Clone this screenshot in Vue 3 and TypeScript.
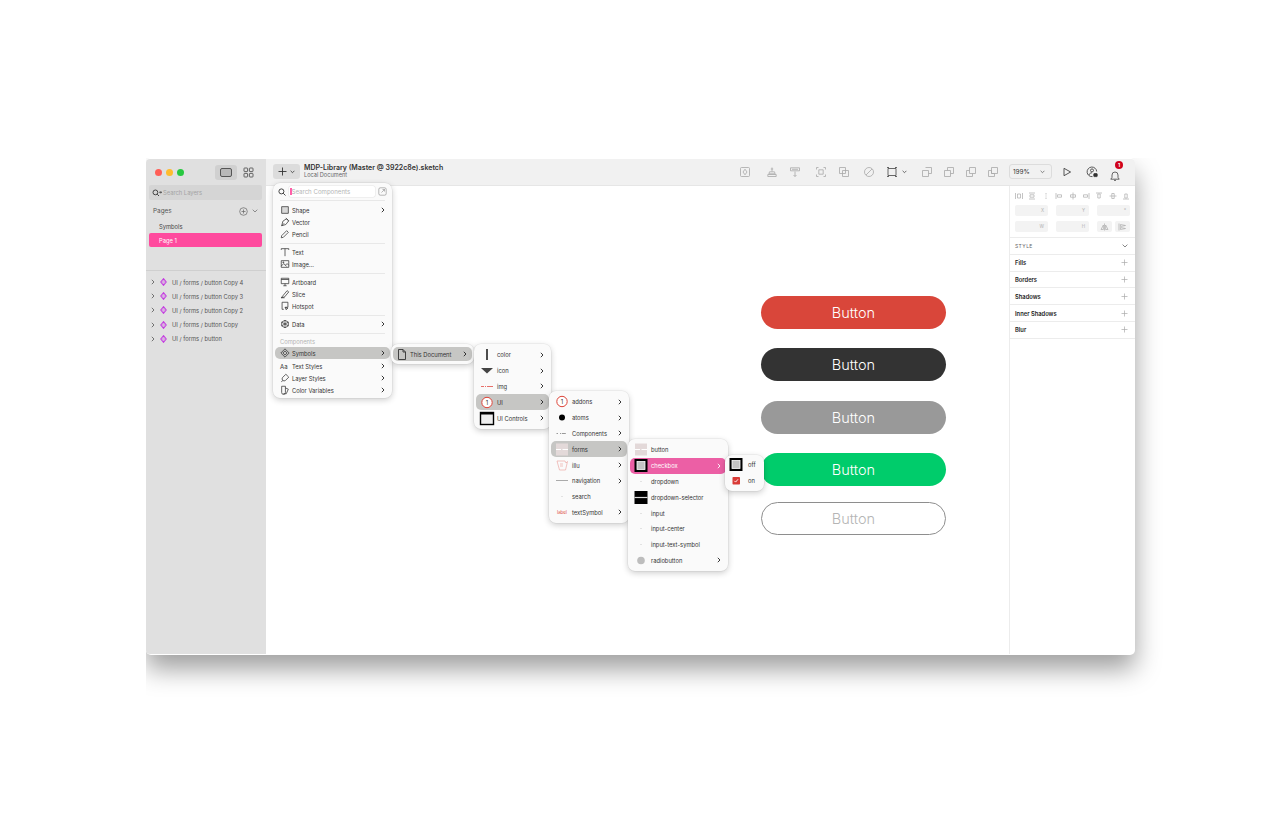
<template>
  <div class="page">
    <div class="window">
      <aside class="sidebar">
        <div class="side-top">
          <div class="lights"><i class="red" /><i class="yellow" /><i class="green" /></div>
          <div class="view-btn on">
            <svg width="14" height="11" viewBox="0 0 14 11"><rect x="1.5" y="1.5" width="11" height="8" rx="1.5" fill="#b8b8b8" stroke="#555" /></svg>
          </div>
          <div class="view-btn">
            <svg width="11" height="11" viewBox="0 0 11 11" fill="none" stroke="#444" stroke-width=".8"><rect x="1" y="1" width="3.6" height="3.6" rx=".6" /><rect x="6.4" y="1" width="3.6" height="3.6" rx=".6" /><rect x="1" y="6.4" width="3.6" height="3.6" rx=".6" /><rect x="6.4" y="6.4" width="3.6" height="3.6" rx=".6" /></svg>
          </div>
        </div>
        <div class="side-search">
          <svg width="10" height="8" viewBox="0 0 10 8" fill="none" stroke="#444"><circle cx="3.4" cy="3.4" r="2.4" /><path d="M5.2 5.2 7 7M7.6 3h2L8.6 4.2z" /></svg>
          <span>Search Layers</span>
        </div>
        <div class="pages-head">
          <span>Pages</span>
          <svg class="pages-add" width="9" height="9" viewBox="0 0 9 9" fill="none" stroke="#666" stroke-width=".7"><circle cx="4.5" cy="4.5" r="3.8" /><path d="M4.5 2.5v4M2.5 4.5h4" /></svg>
          <svg width="6" height="4" viewBox="0 0 6 4" fill="none" stroke="#666" stroke-width=".7"><path d="m.7.7 2.3 2.3L5.300.7" /></svg>
        </div>
        <div class="page-row">Symbols</div>
        <div class="page-row active">Page 1</div>
        <div class="layers">
          <div v-for="layer in layers" :key="layer" class="layer">
            <svg width="4" height="6" viewBox="0 0 4 6" fill="none" stroke="#555" stroke-width=".8"><path d="m.8.8 2.200 2.200L.8 5.200" /></svg>
            <svg width="7" height="8" viewBox="0 0 7 8" fill="none" stroke="#c43ee0" stroke-width="1.100"><path d="M3.500.7 6.200 4 3.500 7.300.8 4z" /><path d="M3.500 2.600 4.600 4 3.500 5.400 2.400 4z" stroke-width=".5" /></svg>
            <span>{{ layer }}</span>
          </div>
        </div>
      </aside>

      <div class="main">
        <header class="toolbar">
          <div class="add-btn">
            <svg width="9" height="9" viewBox="0 0 9 9" stroke="#333" stroke-width=".9"><path d="M4.500.5v8M.5 4.500h8" /></svg>
            <svg width="5" height="4" viewBox="0 0 5 4" fill="none" stroke="#333" stroke-width=".8"><path d="m.6.800 1.900 1.900L4.400.8" /></svg>
          </div>
          <div class="doc">
            <strong>MDP-Library (Master @ 3922c8e).sketch</strong>
            <span>Local Document</span>
          </div>
          <div class="tools">
            <svg v-for="tool in tools" :key="tool.x" class="tool" :class="{ dark: tool.dark }" :style="{ left: tool.x + 'px' }" width="12" height="12" viewBox="0 0 12 12" fill="none" stroke-width=".8"><path :d="tool.d" /></svg>
            <svg class="tool-caret" width="5" height="4" viewBox="0 0 5 4" fill="none" stroke="#333" stroke-width=".7"><path d="m.6.8 1.900 1.900L4.400.8" /></svg>
          </div>
          <div class="zoom-box">
            <span>199%</span>
            <svg width="5" height="4" viewBox="0 0 5 4" fill="none" stroke="#555" stroke-width=".7"><path d="m.6.8 1.900 1.900L4.400.8" /></svg>
          </div>
          <svg class="right-ico" width="10" height="10" viewBox="0 0 10 10" fill="none" stroke="#444" stroke-width=".9"><path d="M2 1.300v7.400L8.600 5z" /></svg>
          <svg class="right-ico user" width="12" height="12" viewBox="0 0 12 12" fill="none" stroke="#333" stroke-width=".8"><path d="M6.500 10.600A4.800 4.800 0 1 1 10.700 5.500M2.800 9c.6-1.500 1.800-2.200 3.200-2.200" /><circle cx="6" cy="4.400" r="1.500" /><rect x="7.800" y="7.600" width="3.400" height="3" rx=".5" fill="#333" /></svg>
          <div class="bell">
            <svg width="12" height="12" viewBox="0 0 12 12" fill="none" stroke="#444" stroke-width=".8"><path d="M1.800 9.200h8.400L9 7.400V5a3 3 0 0 0-6 0v2.400zM5 10.400h2" /></svg>
            <b>1</b>
          </div>
        </header>

        <div class="content">
          <section class="canvas">
            <button v-for="btn in buttons" :key="btn.cls" class="cta" :class="btn.cls">Button</button>
          </section>

          <aside class="inspector">
            <div class="align-row">
              <svg v-for="a in aligns" :key="a" width="8" height="8" viewBox="0 0 8 8" fill="none" stroke="#b5b5b5" stroke-width=".8"><path :d="a" /></svg>
            </div>
            <div class="fields">
              <div v-for="f in ['X', 'Y', '°', 'W', 'H']" :key="f" class="field">{{ f }}</div>
              <div class="field-pair">
                <div class="field small">
                  <svg width="9" height="8" viewBox="0 0 9 8" fill="none" stroke="#aaa" stroke-width=".7"><path d="M4.500.5v7M3.400 2 1 6.500h2.400zM5.600 2 8 6.500H5.600z" /></svg>
                </div>
                <div class="field small">
                  <svg width="9" height="8" viewBox="0 0 9 8" fill="none" stroke="#aaa" stroke-width=".7"><path d="M1 .5v7M2.500 1.500 7.500 2.500 2.500 3.500zM2.500 4.500 7.500 5.500 2.500 6.500z" /></svg>
                </div>
              </div>
            </div>
            <div class="style-head">
              <span>STYLE</span>
              <svg width="6" height="4" viewBox="0 0 6 4" fill="none" stroke="#555" stroke-width=".7"><path d="m.6.600 2.400 2.400L5.400.6" /></svg>
            </div>
            <div v-for="s in sections" :key="s" class="style-row">
              <span>{{ s }}</span>
              <svg width="7" height="7" viewBox="0 0 7 7" stroke="#aaa" stroke-width=".7"><path d="M3.500.5v6M.5 3.500h6" /></svg>
            </div>
          </aside>
        </div>
      </div>

      <div class="menu insert">
        <div class="insert-search">
          <svg width="8" height="8" viewBox="0 0 8 8" fill="none" stroke="#333" stroke-width=".9"><circle cx="3.400" cy="3.400" r="2.500" /><path d="m5.200 5.200 2.300 2.300" /></svg>
          <div class="search-input"><i />Search Components</div>
          <svg width="9" height="9" viewBox="0 0 9 9" fill="none" stroke="#888" stroke-width=".6"><rect x=".8" y=".8" width="7.400" height="7.400" rx="1.500" /><path d="M3.500 5.500 6.500 2.500M4.500 2.500h2v2" /></svg>
        </div>
        <template v-for="(group, g) in insertGroups" :key="g">
          <div class="sep" />
          <div v-if="group.label" class="group-label">{{ group.label }}</div>
          <div v-for="item in group.items" :key="item.name" class="insert-row" :class="{ selected: item.selected }">
            <span v-if="item.name === 'Text Styles'" class="aa">Aa</span>
            <svg v-else width="10" height="10" viewBox="0 0 12 12" :fill="item.name === 'Shape' ? '#d8d8d8' : 'none'" stroke="#333" stroke-width=".9"><path :d="item.icon" /></svg>
            <span class="label">{{ item.name }}</span>
            <svg v-if="item.sub" class="chev" width="4" height="6" viewBox="0 0 4 6" fill="none" stroke="#222" stroke-width=".9"><path d="m.8.8 2.200 2.200L.8 5.200" /></svg>
          </div>
        </template>
      </div>

      <div v-for="menu in symbolMenus" :key="menu.id" class="menu sym" :class="menu.id" :style="{ left: menu.x + 'px', top: menu.y + 'px', width: menu.w + 'px' }">
        <div v-for="row in menu.rows" :key="row.name" class="sym-row" :class="row.state">
          <div class="thumb">
            <svg width="16" height="15" viewBox="0 0 16 15" fill="none">
              <template v-if="row.kind === 'doc'"><path d="M4.500 2.500h4.500l2.500 2.500v7.500h-7zM9 2.500V5h2.500" stroke="#333" stroke-width=".9" /></template>
              <rect v-else-if="row.kind === 'bar'" x="7.200" y="2" width="1.600" height="11" fill="#222" />
              <path v-else-if="row.kind === 'tri'" d="M2 5h12l-6 5.500z" fill="#444" />
              <path v-else-if="row.kind === 'img'" d="M2 7.500h3M6 7.500h1M8 7.500h6" stroke="#e8706a" />
              <template v-else-if="row.kind === 'one'">
                <circle cx="8" cy="7.500" r="5.200" fill="#fff" stroke="#dd4337" />
                <text x="8" y="9.500" class="one" text-anchor="middle">1</text>
              </template>
              <template v-else-if="row.kind === 'ctrl'">
                <rect x="1.500" y="1.500" width="13" height="12" fill="#eee" stroke="#000" stroke-width="1.400" />
                <rect x="2" y="2" width="12" height="1.500" fill="#000" />
              </template>
              <circle v-else-if="row.kind === 'dot'" cx="8" cy="7.500" r="3" fill="#000" />
              <path v-else-if="row.kind === 'comps'" d="M2.500 7.500h1.500M6 7.500h1M7.800 7.500h4" stroke="#999" stroke-width="1.200" />
              <template v-else-if="row.kind === 'form'">
                <rect x="2" y="1.500" width="12" height="12" fill="#e3d9d9" />
                <path d="M2 7.500h5M8.500 7.500h5.500" stroke="#fff" stroke-width="1" />
              </template>
              <path v-else-if="row.kind === 'illu'" d="M3 3h8l1 2 1.500-1.500-2 8.500H5.500zM6 6h3M6 8h3" stroke="#eda9a5" stroke-width=".7" />
              <path v-else-if="row.kind === 'line'" d="M2 7.500h12" stroke="#aaa" />
              <circle v-else-if="row.kind === 'speck'" cx="8" cy="7.500" r=".5" fill="#bbb" />
              <text v-else-if="row.kind === 'label'" x="8" y="9" class="tiny" text-anchor="middle">label</text>
              <template v-else-if="row.kind === 'check'">
                <rect x="1.500" y="1" width="13" height="13" fill="#000" />
                <rect x="4" y="3.500" width="8" height="8" fill="#c4c4c4" stroke="#fff" stroke-width=".8" />
              </template>
              <template v-else-if="row.kind === 'select'">
                <rect x="1.500" y="1" width="13" height="13" fill="#000" />
                <path d="M1.500 7.500h13" stroke="#ddd" stroke-width="1.200" />
              </template>
              <circle v-else-if="row.kind === 'radio'" cx="8" cy="7.500" r="3.800" fill="#bdbdbd" />
              <template v-else-if="row.kind === 'on'">
                <rect x="4.500" y="4" width="7.500" height="7.500" rx=".8" fill="#d93a36" />
                <path d="m6.300 7.800 1.300 1.300 2.400-2.800" stroke="#fff" stroke-width=".9" />
              </template>
            </svg>
          </div>
          <span class="label">{{ row.name }}</span>
          <svg v-if="row.sub" class="chev" width="4" height="6" viewBox="0 0 4 6" fill="none" stroke-width=".9"><path d="m.8.8 2.200 2.200L.8 5.200" /></svg>
        </div>
      </div>
    </div>
  </div>
</template>

<script setup lang="ts">
interface InsertItem {
  name: string
  icon?: string
  sub?: boolean
  selected?: boolean
}

interface SymRow {
  name: string
  kind: string
  sub?: boolean
  state?: string
}

const layers = [
  'UI / forms / button Copy 4',
  'UI / forms / button Copy 3',
  'UI / forms / button Copy 2',
  'UI / forms / button Copy',
  'UI / forms / button',
]

const tools = [
  { x: 473, d: 'M2.500 1.500h7a1 1 0 0 1 1 1v7a1 1 0 0 1-1 1h-7a1 1 0 0 1-1-1v-7a1 1 0 0 1 1-1zM6 3.200 8 6 6 8.800 4 6z' },
  { x: 500, d: 'M6 1.500v4M4.800 3h2.400M3.500 5.800h5l.6 2H2.900zM1.800 8.500h8.400v2H1.800z' },
  { x: 523, d: 'M1.500 1.800h9v3h-9zM3 3.300h6M6 5.500v5M4.500 9l1.500 1.500L7.500 9' },
  { x: 549, d: 'M1.500 1.500h2M8.500 1.500h2v2M10.500 8.500v2h-2M3.500 10.500h-2v-2M1.500 3.500v-2M3.800 3.800h4.400v4.400H3.800z' },
  { x: 572, d: 'M1.500 1.500h6v6h-6zM4.500 4.500h6v6h-6z' },
  { x: 597, d: 'M6 1.500a4.500 4.500 0 1 1 0 9 4.500 4.500 0 0 1 0-9zM3 9 9 3' },
  { x: 620, d: 'M2 2.500h8v7H2zM1 1.500h2M9 1.500h2M1 10.500h2M9 10.500h2', dark: true },
  { x: 655, d: 'M4.500 1.500h6v6h-3M1.500 4.500h6v6h-6z' },
  { x: 677, d: 'M4.500 4.500v-3h6v6h-3M1.500 4.500h6v6h-6z' },
  { x: 699, d: 'M4.500 1.500h6v6h-6zM4.500 4.500h-3v6h6v-3' },
  { x: 721, d: 'M4.500 1.500h6v6h-6zM1.500 4.500h3v3h3v3h-6z' },
]

const buttons = [
  { cls: 'red' },
  { cls: 'dark' },
  { cls: 'gray' },
  { cls: 'green' },
  { cls: 'outline' },
]

const aligns = [
  'M.5 1v6M7.500 1v6M2.500 2v4h3V2z',
  'M1 1h6M1 7h6M2 2.800h4v2.400H2z',
  'M4 1v1.500M4 3.500v1M4 5.500V7',
  'M1 1v6M2.500 2.800h4v2.400h-4z',
  'M4 .5v7M1.500 2.800h5v2.400h-5z',
  'M7 1v6M1.500 2.800h4v2.400h-4z',
  'M1 1h6M2.800 2h2.400v4H2.800z',
  'M.5 4h7M2.800 1.500h2.400v5H2.800z',
  'M1 7h6M2.800 2h2.400v4H2.800z',
]

const sections = ['Fills', 'Borders', 'Shadows', 'Inner Shadows', 'Blur']

const insertGroups: { label?: string; items: InsertItem[] }[] = [
  {
    items: [
      { name: 'Shape', icon: 'M2 2h8v8H2z', sub: true },
      { name: 'Vector', icon: 'M2 10.500 3.500 5 8 2l2.500 2.500L7 9zM2 10.500l3-3M7 1.500l3.500 3.500' },
      { name: 'Pencil', icon: 'M1.500 10.500 2 8l6-6 2 2-6 6z' },
    ],
  },
  {
    items: [
      { name: 'Text', icon: 'M1.500 2h9M6 2v9M1.500 2v1.500M10.500 2v1.500' },
      { name: 'Image...', icon: 'M1.500 2h9v8h-9zM1.500 8.500 4.500 5.500 8 9M6.500 7.500 8.500 5.500l2 2M3.500 3.500h1v1h-1z' },
    ],
  },
  {
    items: [
      { name: 'Artboard', icon: 'M1.500 1.500h9v6.500h-9zM1.500 3h9M4 10.500h4M6 8v2.500' },
      { name: 'Slice', icon: 'M1.500 10.500 8.500 2l2 1.500-5 6zM1.500 10.500h4' },
      { name: 'Hotspot', icon: 'M2.500 1.500h7v6h-3M2.500 1.500v8.500M2.500 10h2M6 7.500l1.500 3 .7-1.300 1.300-.5z' },
    ],
  },
  {
    items: [{ name: 'Data', icon: 'M6 1.500 10 3.800v4.400L6 10.500 2 8.200V3.800zM6 1.500v9M2 3.800l8 4.400M10 3.800 2 8.200', sub: true }],
  },
  {
    label: 'Components',
    items: [
      { name: 'Symbols', icon: 'M6 1 11 6 6 11 1 6zM6 3.500 8.500 6 6 8.500 3.500 6z', sub: true, selected: true },
      { name: 'Text Styles', sub: true },
      { name: 'Layer Styles', icon: 'M1.500 10.500 3.500 9M3 5.500 7 1.500l3.500 3.500L6.500 9a2.500 2.500 0 0 1-3.500-3.500z', sub: true },
      { name: 'Color Variables', icon: 'M2 1.500h4.500v7.500a1.800 1.800 0 0 1-4.500 0zM6.500 3.500 10 5 7.500 10.500H4', sub: true },
    ],
  },
]

const symbolMenus: { id: string; x: number; y: number; w: number; rows: SymRow[] }[] = [
  {
    id: 'm-doc',
    x: 245,
    y: 186,
    w: 83,
    rows: [{ name: 'This Document', kind: 'doc', sub: true, state: 'gray' }],
  },
  {
    id: 'm-a',
    x: 328,
    y: 186,
    w: 77,
    rows: [
      { name: 'color', kind: 'bar', sub: true },
      { name: 'icon', kind: 'tri', sub: true },
      { name: 'img', kind: 'img', sub: true },
      { name: 'UI', kind: 'one', sub: true, state: 'gray' },
      { name: 'UI Controls', kind: 'ctrl', sub: true },
    ],
  },
  {
    id: 'm-b',
    x: 403,
    y: 233,
    w: 80,
    rows: [
      { name: 'addons', kind: 'one', sub: true },
      { name: 'atoms', kind: 'dot', sub: true },
      { name: 'Components', kind: 'comps', sub: true },
      { name: 'forms', kind: 'form', sub: true, state: 'gray' },
      { name: 'illu', kind: 'illu', sub: true },
      { name: 'navigation', kind: 'line', sub: true },
      { name: 'search', kind: 'speck' },
      { name: 'textSymbol', kind: 'label', sub: true },
    ],
  },
  {
    id: 'm-c',
    x: 482,
    y: 281,
    w: 100,
    rows: [
      { name: 'button', kind: 'form' },
      { name: 'checkbox', kind: 'check', sub: true, state: 'pink' },
      { name: 'dropdown', kind: 'speck' },
      { name: 'dropdown-selector', kind: 'select' },
      { name: 'input', kind: 'speck' },
      { name: 'input-center', kind: 'speck' },
      { name: 'input-text-symbol', kind: 'speck' },
      { name: 'radiobutton', kind: 'radio', sub: true },
    ],
  },
  {
    id: 'm-d',
    x: 579,
    y: 297,
    w: 39,
    rows: [
      { name: 'off', kind: 'check' },
      { name: 'on', kind: 'on' },
    ],
  },
]
</script>

<style>
html,
body {
  margin: 0;
  background: #fff;
}
</style>

<style scoped>
.page {
  width: 1280px;
  height: 832px;
  padding: 158px 0 0 146px;
  box-sizing: border-box;
  font-family: Inter, "Liberation Sans", sans-serif;
  overflow: hidden;
}

.window {
  position: relative;
  display: flex;
  width: 989px;
  height: 497px;
  padding: 1px 0;
  box-sizing: border-box;
  background: #fff;
  border-radius: 5px;
  box-shadow: 0 14px 26px rgba(0, 0, 0, 0.38);
  clip-path: inset(0 -30px -50px 0);
  color: #222;
}

.sidebar {
  flex: 0 0 120px;
  display: flex;
  flex-direction: column;
  background: #e0e0e0;
  border-radius: 4px 0 0 4px;
  font-size: 6px;
}

.side-top {
  display: flex;
  align-items: center;
  height: 26px;
  padding: 0 0 0 9px;
}

.lights {
  display: flex;
  gap: 4px;
  margin-right: 31px;
}

.lights i {
  width: 7px;
  height: 7px;
  border-radius: 50%;
}

.lights .red {
  background: #ff5f57;
}

.lights .yellow {
  background: #febc2e;
}

.lights .green {
  background: #28c840;
}

.view-btn {
  display: flex;
  align-items: center;
  justify-content: center;
  width: 22px;
  height: 15px;
  border-radius: 3px;
}

.view-btn.on {
  background: #d0d0d0;
}

.side-search {
  display: flex;
  align-items: center;
  gap: 1px;
  height: 15px;
  margin: 0 4px 0 3px;
  padding-left: 3px;
  background: #d5d5d5;
  border-radius: 2px;
  color: #a4a4a4;
  font-size: 5.8px;
}

.pages-head {
  display: flex;
  align-items: center;
  height: 12px;
  margin: 5px 8px 0 7px;
  color: #555;
  font-size: 6.4px;
}

.pages-add {
  margin: 0 4px 0 auto;
}

.page-row {
  display: flex;
  align-items: center;
  height: 14px;
  margin: 2px 4px 0 3px;
  padding-left: 10px;
  border-radius: 2px;
  color: #444;
  font-size: 5.8px;
}

.page-row.active {
  margin-top: 0;
  background: #ff4a9e;
  color: #fff;
}

.layers {
  margin-top: 23px;
  padding-top: 4px;
  border-top: 1px solid #cfcfcf;
}

.layer {
  display: flex;
  align-items: center;
  height: 14.2px;
  padding-left: 5px;
  color: #555;
  font-size: 5.8px;
}

.layer svg:nth-child(2) {
  margin: 0 5px 0 5px;
}

.main {
  flex: 1;
  display: flex;
  flex-direction: column;
  min-width: 0;
}

.toolbar {
  position: relative;
  flex: 0 0 27px;
  display: flex;
  align-items: center;
  padding: 0 0 1px 7px;
  background: #f1f1f1;
  border-bottom: 1px solid #e6e6e6;
  box-sizing: border-box;
  border-radius: 0 4px 0 0;
}

.add-btn {
  display: flex;
  align-items: center;
  justify-content: center;
  gap: 3px;
  width: 27px;
  height: 15px;
  background: #dcdcdc;
  border-radius: 3px;
}

.doc {
  display: flex;
  flex-direction: column;
  margin-left: 4px;
  line-height: 7px;
  font-size: 5.6px;
  color: #666;
}

.doc strong {
  color: #333;
  font-size: 7px;
  font-weight: 600;
  line-height: 8px;
}

.tools {
  position: absolute;
  inset: 0;
  pointer-events: none;
}

.tool {
  position: absolute;
  top: 7px;
  stroke: #a8a8a8;
}

.tool.dark {
  stroke: #444;
}

.tool-caret {
  position: absolute;
  top: 11px;
  left: 636px;
}

.zoom-box {
  position: absolute;
  left: 743px;
  top: 5px;
  display: flex;
  align-items: center;
  justify-content: space-between;
  width: 43px;
  height: 15px;
  padding: 0 6px 0 3px;
  box-sizing: border-box;
  border: 1px solid #dcdcdc;
  border-radius: 3px;
  color: #333;
  font-size: 6.4px;
}

.right-ico {
  position: absolute;
  left: 796px;
  top: 8px;
}

.right-ico.user {
  left: 820px;
  top: 7px;
}

.bell {
  position: absolute;
  left: 843px;
  top: 7px;
  width: 12px;
  height: 12px;
}

.bell b {
  position: absolute;
  left: 6px;
  top: -5px;
  width: 8px;
  height: 8px;
  border-radius: 50%;
  background: #d0021b;
  color: #fff;
  font-size: 5px;
  line-height: 8px;
  text-align: center;
}

.content {
  flex: 1;
  display: flex;
  min-height: 0;
}

.canvas {
  flex: 1;
  display: flex;
  flex-direction: column;
  align-items: flex-start;
  padding: 110px 0 0 495px;
}

.cta {
  width: 185px;
  height: 33px;
  margin-bottom: 19px;
  padding: 0;
  border: 0;
  border-radius: 17px;
  color: #fff;
  font-family: Inter, sans-serif;
  font-size: 14.500px;
  font-weight: 300;
}

.cta.red {
  background: #d9463a;
}

.cta.dark {
  margin-bottom: 20px;
  background: #333;
}

.cta.gray {
  background: #999;
}

.cta.green {
  margin-bottom: 16px;
  background: #00cc6b;
}

.cta.outline {
  background: #fff;
  border: 1px solid #8e8e8e;
  color: #b5b5b5;
}

.inspector {
  flex: 0 0 126px;
  box-sizing: border-box;
  border-left: 1px solid #ececec;
  font-size: 5.6px;
}

.align-row {
  display: flex;
  justify-content: space-between;
  height: 19px;
  align-items: center;
  padding: 0 5px 0 5px;
}

.fields {
  display: grid;
  grid-template-columns: repeat(3, 33px);
  gap: 5px 8px;
  padding: 0 5px 5px 5px;
  border-bottom: 1px solid #ececec;
}

.field {
  display: flex;
  align-items: center;
  justify-content: flex-end;
  height: 11px;
  padding-right: 4px;
  box-sizing: border-box;
  border-radius: 2px;
  background: #f3f3f3;
  color: #b0b0b0;
  font-size: 4.5px;
}

.field-pair {
  display: flex;
  gap: 3px;
}

.field.small {
  flex: 1;
  justify-content: center;
  padding: 0;
}

.style-head,
.style-row {
  display: flex;
  align-items: center;
  justify-content: space-between;
  padding: 0 7px 0 5px;
  height: 16.800px;
  box-sizing: border-box;
  border-bottom: 1px solid #ececec;
}

.style-head {
  color: #666;
  font-size: 5px;
  letter-spacing: 0.4px;
}

.style-row {
  color: #222;
  font-size: 5.8px;
  font-weight: 600;
}

.menu {
  position: absolute;
  box-sizing: border-box;
  background: #fafafa;
  border-radius: 7px;
  box-shadow: 0 0 0 0.5px rgba(0, 0, 0, 0.07), 0 2px 6px rgba(0, 0, 0, 0.2);
  font-size: 5.8px;
  color: #333;
}

.insert {
  left: 127px;
  top: 25px;
  width: 119px;
  padding: 3px 2px 2px;
}

.insert-search {
  display: flex;
  align-items: center;
  gap: 3px;
  height: 11px;
  padding: 0 3px;
  margin-bottom: 3px;
}

.search-input {
  flex: 1;
  display: flex;
  align-items: center;
  height: 11px;
  box-sizing: border-box;
  border-radius: 2px;
  background: #fff;
  box-shadow: 0 0 0 0.5px #e4e4e4;
  color: #b5b5b5;
  font-size: 6.100px;
}

.search-input i {
  width: 1.500px;
  height: 7px;
  margin: 0 0 0 1px;
  background: #ff5fa8;
}

.sep {
  height: 1px;
  margin: 2.500px 5px;
  background: #e8e8e8;
}

.insert-search + .sep {
  margin-top: 0;
  margin-bottom: 3px;
}

.group-label {
  display: flex;
  align-items: center;
  height: 11px;
  padding-left: 5px;
  color: #b4b4b4;
}

.insert-row {
  display: flex;
  align-items: center;
  height: 12px;
  padding: 0 5px;
  border-radius: 5px;
}

.insert-row.selected {
  margin-bottom: 1px;
  background: #c6c6c4;
}

.insert-row svg:first-child,
.aa {
  flex: 0 0 10px;
  margin-right: 2px;
}

.aa {
  font-size: 6px;
}

.insert-row .label,
.sym-row .label {
  flex: 1;
}

.chev {
  flex: 0 0 4px;
  stroke: #222;
}

.sym {
  padding: 3px 2px;
}

.sym-row {
  display: flex;
  align-items: center;
  height: 15.800px;
  padding-right: 5px;
  border-radius: 5px;
}

.sym-row.gray {
  background: #c6c6c4;
}

.sym-row.pink {
  background: #ec5fa5;
  color: #fff;
}

.sym-row.pink .chev {
  stroke: #fff;
}

.thumb {
  flex: 0 0 16px;
  display: flex;
  margin: 0 2px 0 3px;
}

.one {
  fill: #333;
  font-size: 6px;
}

.tiny {
  fill: #dd4337;
  font-size: 4.400px;
}

.m-doc {
  z-index: 1;
}

.m-doc .sym-row {
  height: 14px;
}

.m-doc .thumb {
  margin: 0 0 0 1px;
}

.m-a {
  z-index: 2;
}

.m-b {
  z-index: 3;
}

.m-c {
  z-index: 4;
}

.m-d {
  z-index: 5;
  padding: 2px;
}

.m-d .thumb {
  margin: 0 4px 0 1px;
}
</style>
